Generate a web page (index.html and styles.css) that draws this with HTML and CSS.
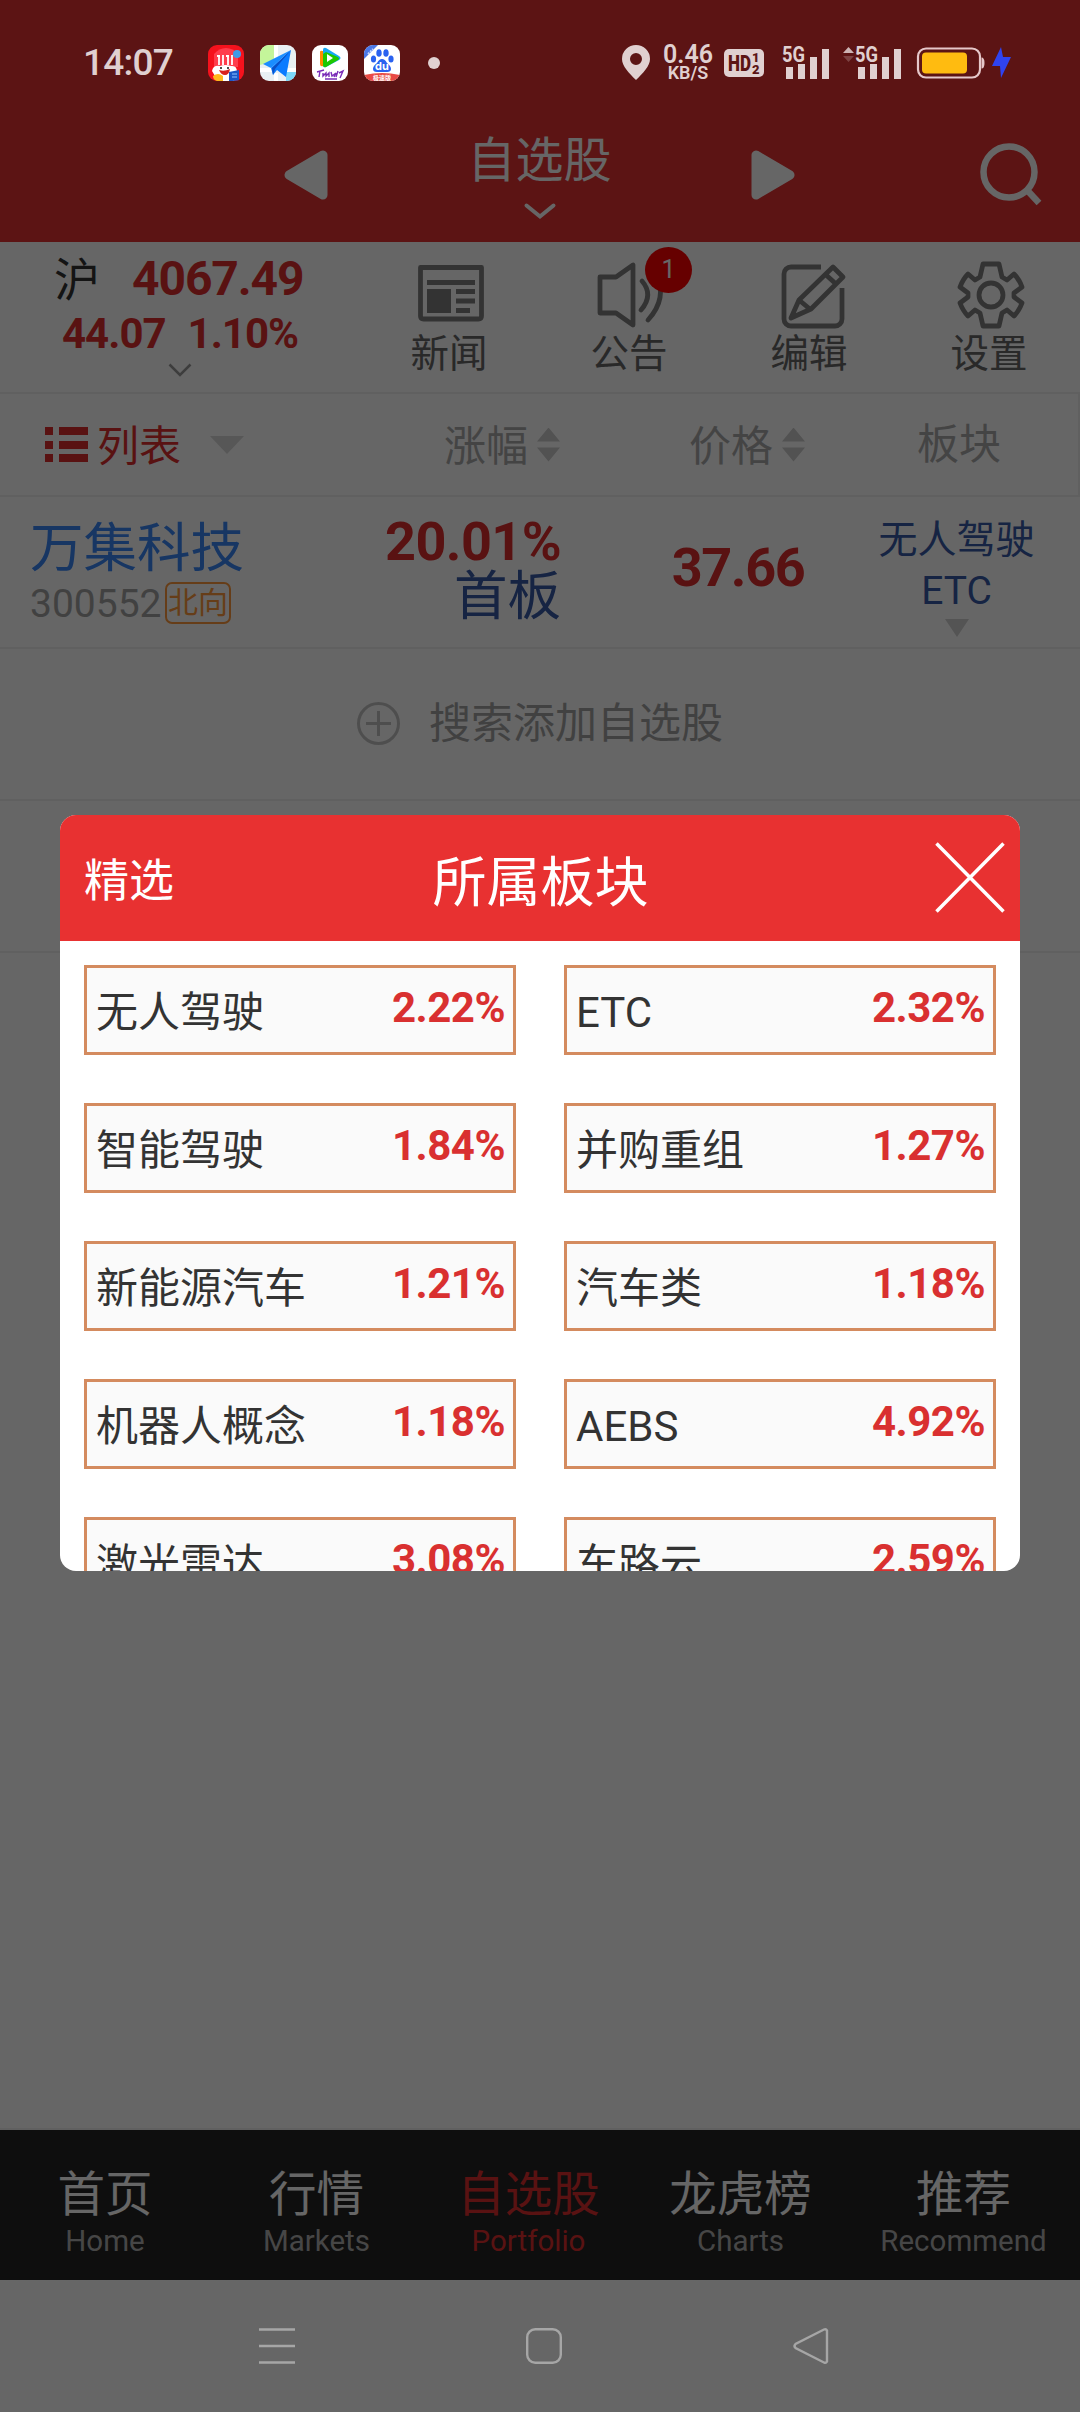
FILE: index.html
```html
<!DOCTYPE html>
<html lang="zh-CN">
<head>
  <meta charset="UTF-8">
  <title>自选股</title>
  <link rel="stylesheet" href="styles.css">
</head>
<body>
  <div class="status-bar">
    <span class="time">14:07</span>
    <div class="apps">
      <svg width="36" height="36" viewBox="0 0 36 36">
        <rect width="36" height="36" rx="9" fill="#f5121d"/>
        <path d="M6 22V9q5-6 12-6t12 6v13z" fill="#ff3d4c"/>
        <circle cx="29" cy="9" r="4" fill="#3f9ae8"/>
        <path d="M11 10v10M15 10v10M20 10v10M24 10v10M9 11h3M18 11h3" stroke="#fff" stroke-width="1.8"/>
        <path d="M4 26q1-6 8-5 5-2 11 0 6-1 6 6l-3 9H10z" fill="#fff"/>
        <path d="M11 25q5 2 11-1-1 6-5 6t-6-5z" fill="#d8221f"/>
        <circle cx="13" cy="23" r="1" fill="#111"/><circle cx="20" cy="23" r="1" fill="#111"/>
        <path d="M5 31q5-4 10 0v5H9q-4-1-4-5z" fill="#ffb81c"/>
        <path d="M21 27l10-2v10q-3 1-10 1z" fill="#1c58c8"/>
        <path d="M24 29h5M24 32h5" stroke="#8fc4ff" stroke-width="1"/>
      </svg>
      <svg width="36" height="36" viewBox="0 0 36 36">
        <rect width="36" height="36" rx="9" fill="#e9f0f3"/>
        <path d="M9 0h5v16L0 20V9a9 9 0 0 1 9-9z" fill="#c4f59a"/>
        <path d="M26 27h10a9 9 0 0 1-9 9h-1z" fill="#7cd8fa"/>
        <path d="M14 0h4v14h-4zM0 23h12v4H0zM24 23h12v4H24zM14 28h4v8h-4z" fill="#fff"/>
        <path d="M31 5L3 19l8 4z" fill="#1a8dff"/>
        <path d="M31 5L11 23l2 7 4-5 9 7z" fill="#0a7bff"/>
        <path d="M31 5L15 24l-2 6-1-7z" fill="#0a4fc4"/>
      </svg>
      <svg width="36" height="36" viewBox="0 0 36 36">
        <rect width="36" height="36" rx="9" fill="#fff"/>
        <path d="M8 7q0-2 3-1l3 1v12l-3 2q-3 1-3-2z" fill="#ff8a00"/>
        <path d="M11 5q0-3 3-2l13 8q3 2 0 4l-13 7q-3 1-3-2z" fill="#16a8f5"/>
        <path d="M11 9v11q0 3 3 2l12-7q2-1 0-3L14 7z" fill="#1ec800"/>
        <path d="M15 9v8l6-4z" fill="#fff"/>
        <path d="M5 27l7-2M8 26l-1 6M11 28v3l3-3v3l3-3v4M19 27l1 4 4-3-2 4M26 26l-2 6M27 28l4-2-3 7M13 34h12" fill="none" stroke="#7a2cb8" stroke-width="1.4"/>
      </svg>
      <svg width="36" height="36" viewBox="0 0 36 36">
        <clipPath id="baidu"><rect width="36" height="36" rx="9"/></clipPath>
        <g clip-path="url(#baidu)">
          <rect width="36" height="36" fill="#fff"/>
          <path d="M0 0h14L0 14z" fill="#4a78e8"/>
          <path d="M4 9l5-5" stroke="#c6d6ff" stroke-width="2" stroke-dasharray="2 1"/>
          <g fill="#2a62f0">
            <ellipse cx="15" cy="8" rx="2.700" ry="3.800"/><ellipse cx="22" cy="8" rx="2.700" ry="3.800"/>
            <ellipse cx="9.500" cy="14" rx="2.600" ry="3.500"/><ellipse cx="27" cy="14" rx="2.600" ry="3.500"/>
            <path d="M18 14q3 0 5 4 4 3 4 6t-4 3H13q-4 0-4-3t4-6q2-4 5-4z"/>
          </g>
          <text x="18" y="25" class="du">du</text>
          <path d="M0 30q18-4 36 0v6H0z" fill="#e84a44"/>
          <text x="18" y="35" class="lite">极速版</text>
        </g>
      </svg>
    </div>
    <i class="more-dot"></i>

    <svg class="pin" width="28" height="35" viewBox="0 0 28 35">
      <path fill-rule="evenodd" d="M14 0a14 14 0 0 1 14 14c0 7-7 14-14 21C7 28 0 21 0 14A14 14 0 0 1 14 0zm0 8a6 6 0 1 0 0 12 6 6 0 0 0 0-12z" fill="#e0d0d0"/>
    </svg>
    <div class="speed"><b>0.46</b><span>KB/S</span></div>
    <svg class="hd" width="40" height="28" viewBox="0 0 40 28">
      <rect width="40" height="28" rx="5" fill="#e0d0d0"/>
      <g class="hd-text">
        <text x="4" y="22" font-size="22" textLength="23" lengthAdjust="spacingAndGlyphs">HD</text>
        <text x="28" y="13" font-size="13">1</text>
        <text x="28" y="25" font-size="13">2</text>
      </g>
    </svg>
    <svg class="signal" width="48" height="34" viewBox="0 0 48 34">
      <text x="0" y="16" textLength="23" lengthAdjust="spacingAndGlyphs">5G</text>
      <path d="M4 21h7v12H4zM16 18h7v15h-7zM28 11h7v22h-7zM40 3h7v30h-7z"/>
    </svg>
    <svg class="signal" width="72" height="34" viewBox="-24 0 72 34">
      <path d="M-11 7l5.500-6L0 7z" opacity=".85"/>
      <path d="M-11 10l5.500 6L0 10z" opacity=".25"/>
      <text x="1" y="16" textLength="23" lengthAdjust="spacingAndGlyphs">5G</text>
      <path d="M4 21h7v12H4zM16 18h7v15h-7zM28 11h7v22h-7zM40 3h7v30h-7z"/>
    </svg>
    <svg class="battery" width="96" height="32" viewBox="0 0 96 32">
      <rect x="1" y="1.500" width="62" height="29" rx="8" fill="none" stroke="#e6c8ca" stroke-width="2.200"/>
      <rect x="5" y="5.500" width="45" height="21" rx="4" fill="#ffbb10"/>
      <path d="M64.500 10.500q3 0 3 5.500t-3 5.500z" fill="#e6c8ca"/>
      <path d="M84 0L75 19h8l1 12 10-21h-8z" fill="#2f43f0"/>
    </svg>
  </div>

  <div class="page">
    <header class="top-bar">
      <svg class="prev" width="44" height="50" viewBox="0 0 44 50"><path d="M5 25L39 5v40z"/></svg>
      <div class="title">
        <h1>自选股</h1>
        <svg width="32" height="16" viewBox="0 0 32 16"><path d="M2.500 2.500L16 13.500l13.500-11"/></svg>
      </div>
      <svg class="next" width="44" height="50" viewBox="0 0 44 50"><path d="M39 25L5 5v40z"/></svg>
      <svg class="search" width="62" height="64" viewBox="0 0 62 64"><circle cx="29" cy="29" r="25.500"/><path d="M47 47l12 13"/></svg>
    </header>

    <section class="summary">
      <div class="index">
        <div class="index-main"><span>沪</span><b>4067.49</b></div>
        <div class="index-change"><b>44.07</b><b>1.10%</b></div>
        <svg width="24" height="14" viewBox="0 0 24 14"><path d="M1.500 1.500L12 12 22.500 1.500"/></svg>
      </div>
      <div class="tool">
        <svg width="70" height="70" viewBox="0 0 70 70">
          <path d="M5.500 7.500h61V56q0 3-3 3h-55q-3 0-3-3z"/>
          <path class="fill" d="M12 20h48v5H12zM12 29h24v24H12zM41 29h19v5H41zM41 38.500h19v5H41zM41 48h14v5H41z"/>
        </svg>
        <span>新闻</span>
      </div>
      <div class="tool">
        <svg width="70" height="70" viewBox="0 0 70 70">
          <path d="M5 17h16L38 5v60L21 53H5z"/>
          <path d="M47 21q12 14-1 29M61 14q12 24-8 46" stroke-linecap="round"/>
        </svg>
        <i class="badge">1</i>
        <span>公告</span>
      </div>
      <div class="tool">
        <svg width="70" height="70" viewBox="0 0 70 70">
          <path d="M46 7H16a7 7 0 0 0-7 7v45a7 7 0 0 0 7 7h44a7 7 0 0 0 7-7V28"/>
          <path d="M16 58l8-18L58 7l10 10-32 32zM24 40l12 10M50 14l11 10"/>
        </svg>
        <span>编辑</span>
      </div>
      <div class="tool">
        <svg width="70" height="70" viewBox="-36 -35 70 70">
          <path d="M-8-31H8l3 13 5 3 7-6q5 5 8 13l-8 6v4l8 6q-3 8-8 13l-7-6-5 3-3 13H-8l-3-13-5-3-7 6q-5-5-8-13l8-6v-4l-8-6q3-8 8-13l7 6 5-3z"/>
          <circle r="12"/>
        </svg>
        <span>设置</span>
      </div>
    </section>

    <section class="filters">
      <div class="view-mode">
        <svg width="43" height="36" viewBox="0 0 43 36"><path d="M0 0h8v8H0zM14 0h29v8H14zM0 14h8v8H0zM14 14h29v8H14zM0 27h8v8H0zM14 27h29v8H14z"/></svg>
        <span>列表</span>
        <i class="caret"></i>
      </div>
      <div class="sort change-head"><span>涨幅</span><i></i></div>
      <div class="sort price-head"><span>价格</span><i></i></div>
      <div class="plate-head"><span>板块</span></div>
    </section>

    <section class="stock">
      <div class="name">
        <strong>万集科技</strong>
        <div><span>300552</span><em>北向</em></div>
      </div>
      <div class="change"><b>20.01%</b><span>首板</span></div>
      <b class="price">37.66</b>
      <div class="plates"><span>无人驾驶</span><span>ETC</span><i></i></div>
    </section>

    <section class="add">
      <svg width="43" height="43" viewBox="0 0 43 43"><circle cx="21.500" cy="21.500" r="20"/><path d="M21.500 9v25M9 21.500h25"/></svg>
      <span>搜索添加自选股</span>
    </section>
    <section class="empty"></section>

    <nav class="tabs">
      <a><span>首页</span><small>Home</small></a>
      <a><span>行情</span><small>Markets</small></a>
      <a class="active"><span>自选股</span><small>Portfolio</small></a>
      <a><span>龙虎榜</span><small>Charts</small></a>
      <a><span>推荐</span><small>Recommend</small></a>
    </nav>
    <div class="nav-space"></div>
  </div>

  <div class="mask"></div>

  <div class="modal">
    <div class="modal-head">
      <span>精选</span>
      <h2>所属板块</h2>
      <svg width="70" height="71" viewBox="0 0 70 71"><path d="M1.500 1.500l67 68M68.500 1.500l-67 68"/></svg>
    </div>
    <div class="plate-grid">
      <div class="plate"><span>无人驾驶</span><b>2.22%</b></div>
      <div class="plate"><span>ETC</span><b>2.32%</b></div>
      <div class="plate"><span>智能驾驶</span><b>1.84%</b></div>
      <div class="plate"><span>并购重组</span><b>1.27%</b></div>
      <div class="plate"><span>新能源汽车</span><b>1.21%</b></div>
      <div class="plate"><span>汽车类</span><b>1.18%</b></div>
      <div class="plate"><span>机器人概念</span><b>1.18%</b></div>
      <div class="plate"><span>AEBS</span><b>4.92%</b></div>
      <div class="plate"><span>激光雷达</span><b>3.08%</b></div>
      <div class="plate"><span>车路云</span><b>2.59%</b></div>
    </div>
  </div>

  <div class="system-nav">
    <svg width="36" height="36" viewBox="0 0 36 36"><path d="M0 1.500h36M0 18h36M0 34.500h36"/></svg>
    <svg width="36" height="36" viewBox="0 0 36 36"><rect x="1.200" y="1.200" width="33.600" height="33.600" rx="8"/></svg>
    <svg width="36" height="36" viewBox="0 0 36 36"><path d="M34 2.500v31q-1 2-3 1L2.500 20q-2-2 0-4L31 1.500q2-1 3 1z"/></svg>
  </div>
</body>
</html>
```

FILE: styles.css
```css
* {
  box-sizing: border-box;
}

body {
  margin: 0;
  width: 1080px;
  height: 2412px;
  position: relative;
  overflow: hidden;
  background: #fff;
  font-family: Roboto, "Noto Sans CJK SC", sans-serif;
}

h1, h2 {
  margin: 0;
  font-weight: normal;
}

i, em {
  font-style: normal;
}

svg {
  display: block;
  flex: none;
  overflow: visible;
}

/* status bar, stays bright over the mask */
.status-bar {
  position: absolute;
  top: 0;
  left: 0;
  width: 1080px;
  height: 125px;
  padding-left: 83px;
  display: flex;
  align-items: center;
  z-index: 3;
  color: #e0d0d0;
}

.time {
  width: 125px;
  font-size: 37px;
  font-weight: 500;
  letter-spacing: -0.8px;
}

.apps {
  display: flex;
  gap: 16px;
}

.du {
  font: bold 11px Inter, sans-serif;
  fill: #fff;
  text-anchor: middle;
}

.lite {
  font: bold 6px "Noto Sans CJK SC", sans-serif;
  fill: #fff;
  text-anchor: middle;
}

.more-dot {
  width: 12px;
  height: 12px;
  margin-left: 28px;
  border-radius: 50%;
  background: #e0d0d0;
}

.pin {
  margin-left: 182px;
}

.speed {
  width: 50px;
  margin-left: 13px;
  display: flex;
  flex-direction: column;
  align-items: center;
  white-space: nowrap;
}

.speed b {
  font-size: 25px;
  font-weight: 600;
  line-height: 21px;
}

.speed span {
  font-size: 18px;
  font-weight: 600;
  line-height: 16px;
}

.hd {
  margin-left: 11px;
}

.hd-text {
  font-family: Roboto, sans-serif;
  font-weight: 900;
  fill: #5c1414;
}

.signal {
  margin-left: 18px;
  fill: #e0d0d0;
  font: bold 22px Roboto, sans-serif;
}

.signal + .signal {
  margin-left: 0;
}

.battery {
  margin-left: 15px;
}

.page {
  display: flex;
  flex-direction: column;
  height: 2412px;
}

.top-bar {
  height: 242px;
  padding: 107px 38px 0 284px;
  display: flex;
  align-items: center;
  background: #e63232;
}

.top-bar svg {
  fill: none;
  stroke: #fff;
}

.top-bar .prev, .top-bar .next {
  fill: #fff;
  stroke-width: 9;
  stroke-linejoin: round;
}

.title {
  width: 423px;
  display: flex;
  flex-direction: column;
  align-items: center;
  color: #fff;
}

.title h1 {
  font-size: 48px;
  line-height: 60px;
}

.title svg {
  margin: 12px 0 0;
  stroke-width: 4;
  stroke-linecap: round;
}

.search {
  margin-left: auto;
  stroke-width: 6.5;
}

.summary {
  height: 152px;
  display: flex;
  border-bottom: 2px solid #efefef;
}

.index {
  width: 360px;
  display: flex;
  flex-direction: column;
}

.index b {
  color: #de2f2f;
}

.index-main {
  padding: 8px 0 0 54px;
  height: 67px;
  display: flex;
  align-items: center;
}

.index-main span {
  font-size: 46px;
  line-height: 60px;
  color: #333;
}

.index-main b {
  margin: -2px 0 0 32px;
  font-size: 48px;
  line-height: 56px;
  letter-spacing: -1.1px;
}

.index-change {
  padding-left: 62px;
  display: flex;
  gap: 22px;
}

.index-change b {
  font-size: 42px;
  line-height: 50px;
  letter-spacing: -1px;
}

.index svg {
  margin: 4px 0 0 168px;
  fill: none;
  stroke: #999;
  stroke-width: 2.5;
}

.tool {
  position: relative;
  width: 180px;
  padding-top: 18px;
  display: flex;
  flex-direction: column;
  align-items: center;
}

.tool svg {
  fill: none;
  stroke: #808080;
  stroke-width: 4.8;
  stroke-linejoin: round;
}

.tool svg .fill {
  fill: #808080;
  stroke: none;
}

.tool span {
  margin: -1px 2px 0 0;
  font-size: 38.5px;
  line-height: 50px;
  color: #666;
}

.badge {
  position: absolute;
  left: 105px;
  top: 5px;
  width: 47px;
  height: 46px;
  border-radius: 50%;
  background: #ff0000;
  color: #fff;
  font-size: 25px;
  line-height: 46px;
  text-align: center;
}

.filters {
  height: 103px;
  display: flex;
  align-items: center;
  border-bottom: 2px solid #efefef;
  border-right: 2px solid #efefef;
  font-size: 42px;
  line-height: 60px;
  color: #aaa;
}

.filters span {
  padding-top: 4px;
}

.view-mode {
  width: 444px;
  padding-left: 45px;
  display: flex;
  align-items: center;
  color: #de2f2f;
}

.view-mode svg {
  margin-right: 9px;
  fill: #de2f2f;
}

.caret {
  margin-left: 29px;
  border: 17px solid transparent;
  border-top: 18px solid #d9d9d9;
  border-bottom: 0;
}

.sort {
  width: 245px;
  display: flex;
  align-items: center;
  gap: 9px;
}

.sort i {
  width: 23px;
  height: 34px;
  background: #ccc;
  clip-path: polygon(50% 0, 100% 14px, 0 14px, 0 20px, 100% 20px, 50% 100%, 0 20px, 0 14px);
}

.price-head {
  width: 228px;
}

.stock {
  height: 152px;
  display: flex;
  border-bottom: 2px solid #efefef;
}

.name {
  width: 300px;
  padding: 17px 0 0 30px;
}

.name strong {
  display: block;
  font-size: 53.5px;
  line-height: 70px;
  font-weight: normal;
  color: #3a87f8;
}

.name div {
  display: flex;
  align-items: center;
  margin-top: -2px;
}

.name span {
  width: 135px;
  padding-top: 2px;
  font-size: 39px;
  line-height: 40px;
  color: #a3a3a3;
}

.name em {
  width: 66px;
  height: 42px;
  border: 2px solid #ff9a3c;
  border-radius: 7px;
  font-size: 30px;
  line-height: 38px;
  text-align: center;
  color: #ff9a3c;
}

.change {
  width: 261px;
  padding-top: 18px;
  display: flex;
  flex-direction: column;
  align-items: flex-end;
}

.change b, .price {
  color: #de2f2f;
}

.change b {
  font-size: 54px;
  line-height: 54px;
  letter-spacing: -0.6px;
}

.change span {
  font-size: 53.5px;
  line-height: 56px;
  color: #385ba8;
}

.price {
  width: 354px;
  font-size: 54px;
  line-height: 142px;
  text-align: center;
  letter-spacing: -1.4px;
}

.plates {
  width: 165px;
  margin-left: -41px;
  padding-top: 18px;
  display: flex;
  flex-direction: column;
  align-items: center;
  font-size: 39px;
  line-height: 51px;
  color: #385ba8;
  white-space: nowrap;
}

.plates i {
  margin-top: 2px;
  border: 12px solid transparent;
  border-top: 18px solid #d2d2d2;
  border-bottom: 0;
}

.add {
  height: 152px;
  padding-bottom: 1px;
  display: flex;
  align-items: center;
  justify-content: center;
  gap: 29px;
  border-bottom: 2px solid #efefef;
  font-size: 42px;
  line-height: 60px;
  color: #a3a3a3;
}

.add svg {
  fill: none;
  stroke: #c4c4c4;
  stroke-width: 3;
}

.empty {
  height: 152px;
  border-bottom: 2px solid #efefef;
}

.tabs {
  height: 152px;
  margin-top: auto;
  display: grid;
  grid-template-columns: 210px 213px 211px 213px 233px;
  background: #232323;
  border-top: 2px solid #efefef;
  color: #fff;
}

.tabs a {
  padding-top: 35px;
  display: flex;
  flex-direction: column;
  align-items: center;
}

.tabs span {
  font-size: 47.5px;
  line-height: 60px;
}

.tabs small {
  margin-top: -2px;
  font-size: 29.5px;
  line-height: 36px;
  color: #b0b0b0;
}

.tabs .active, .tabs .active small {
  color: #de2f2f;
}

.nav-space {
  height: 132px;
}

.mask {
  position: absolute;
  top: 0;
  left: 0;
  width: 1080px;
  height: 2412px;
  background: rgba(0, 0, 0, 0.6);
  z-index: 1;
}

.modal {
  position: absolute;
  left: 60px;
  top: 815px;
  width: 960px;
  height: 756px;
  border-radius: 16px;
  overflow: hidden;
  background: #fff;
  z-index: 2;
}

.modal-head {
  height: 126px;
  padding: 0 15px 0 24px;
  display: flex;
  align-items: center;
  justify-content: space-between;
  background: #e83131;
  color: #fff;
}

.modal-head span {
  width: 112px;
  margin-top: -2px;
  font-size: 45px;
}

.modal-head h2 {
  font-size: 54px;
}

.modal-head svg {
  margin: -1px 0 0 50px;
  stroke: #fff;
  stroke-width: 3.5;
}

.plate-grid {
  padding: 24px;
  display: grid;
  grid-template-columns: 432px 432px;
  gap: 48px;
}

.plate {
  height: 90px;
  padding: 0 8px 0 9px;
  display: flex;
  justify-content: space-between;
  border: 3px solid #d48b5f;
  background: #fafafa;
}

.plate span {
  font-size: 42px;
  line-height: 89px;
  color: #333;
}

.plate b {
  font-size: 42px;
  line-height: 79px;
  letter-spacing: -0.5px;
  color: #d93030;
}

.system-nav {
  position: absolute;
  left: 0;
  bottom: 0;
  width: 1080px;
  height: 132px;
  padding: 0 251px 0 259px;
  display: flex;
  align-items: center;
  justify-content: space-between;
  z-index: 3;
}

.system-nav svg {
  fill: none;
  stroke: #a6a6a6;
  stroke-width: 2.4;
}
```
